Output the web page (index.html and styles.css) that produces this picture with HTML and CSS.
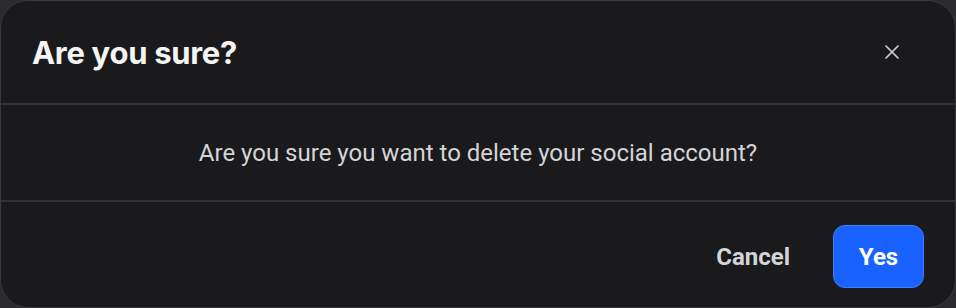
FILE: index.html
```html
<!DOCTYPE html>
<html>
<head>
<meta charset="utf-8">
<link rel="stylesheet" href="styles.css">
</head>
<body>
<div class="dialog">
  <header class="dialog-header">
    <h2 class="dialog-title">Are you sure?</h2>
    <button class="close-btn" aria-label="Close">
      <svg width="16" height="16" viewBox="0 0 16 16"><path d="M2 2L14 14M14 2L2 14" stroke="#d4d4d8" stroke-width="1.6" stroke-linecap="round"/></svg>
    </button>
  </header>
  <div class="dialog-body">
    <p>Are you sure you want to delete your social account?</p>
  </div>
  <footer class="dialog-footer">
    <button class="btn btn-ghost">Cancel</button>
    <button class="btn btn-primary">Yes</button>
  </footer>
</div>
</body>
</html>
```
FILE: styles.css
```css
html, body {
  margin: 0;
  padding: 0;
  background: #2b2b2e;
  width: 956px;
  height: 308px;
  overflow: hidden;
}
.dialog {
  box-sizing: border-box;
  width: 956px;
  height: 308px;
  background: #1a1a1c;
  border-radius: 28px;
  border: 1px solid #3a3a3e;
  display: flex;
  flex-direction: column;
  font-family: Roboto, "Liberation Sans", sans-serif;
}
.dialog-header {
  height: 104px;
  box-sizing: border-box;
  display: flex;
  align-items: center;
  justify-content: space-between;
  padding: 0 55px 0 31px;
  border-bottom: 2px solid #323236;
}
.dialog-title {
  margin: 0;
  font-family: Inter, "Open Sans", sans-serif;
  font-weight: 700;
  font-size: 31px;
  letter-spacing: -0.3px;
  color: #f4f4f5;
}
.close-btn {
  background: none;
  border: none;
  padding: 0;
  width: 16px;
  height: 16px;
  display: flex;
  cursor: pointer;
}
.dialog-body {
  height: 97px;
  box-sizing: border-box;
  display: flex;
  align-items: center;
  justify-content: center;
  border-bottom: 2px solid #323236;
}
.dialog-body p {
  margin: 0;
  font-size: 24px;
  color: #d4d4d8;
}
.dialog-footer {
  flex: 1;
  display: flex;
  align-items: center;
  justify-content: flex-end;
  gap: 15px;
  padding: 4px 31px 0 0;
}
.btn {
  font-family: Roboto, "Liberation Sans", sans-serif;
  font-weight: 700;
  font-size: 24px;
  border: none;
  cursor: pointer;
}
.btn-ghost {
  background: none;
  color: #d4d4d8;
  padding: 0 28px;
  height: 63px;
}
.btn-primary {
  background: #1a62ff;
  color: #fff;
  width: 91px;
  height: 63px;
  border-radius: 12px;
  border: 1px solid #3d7bff;
}
```
